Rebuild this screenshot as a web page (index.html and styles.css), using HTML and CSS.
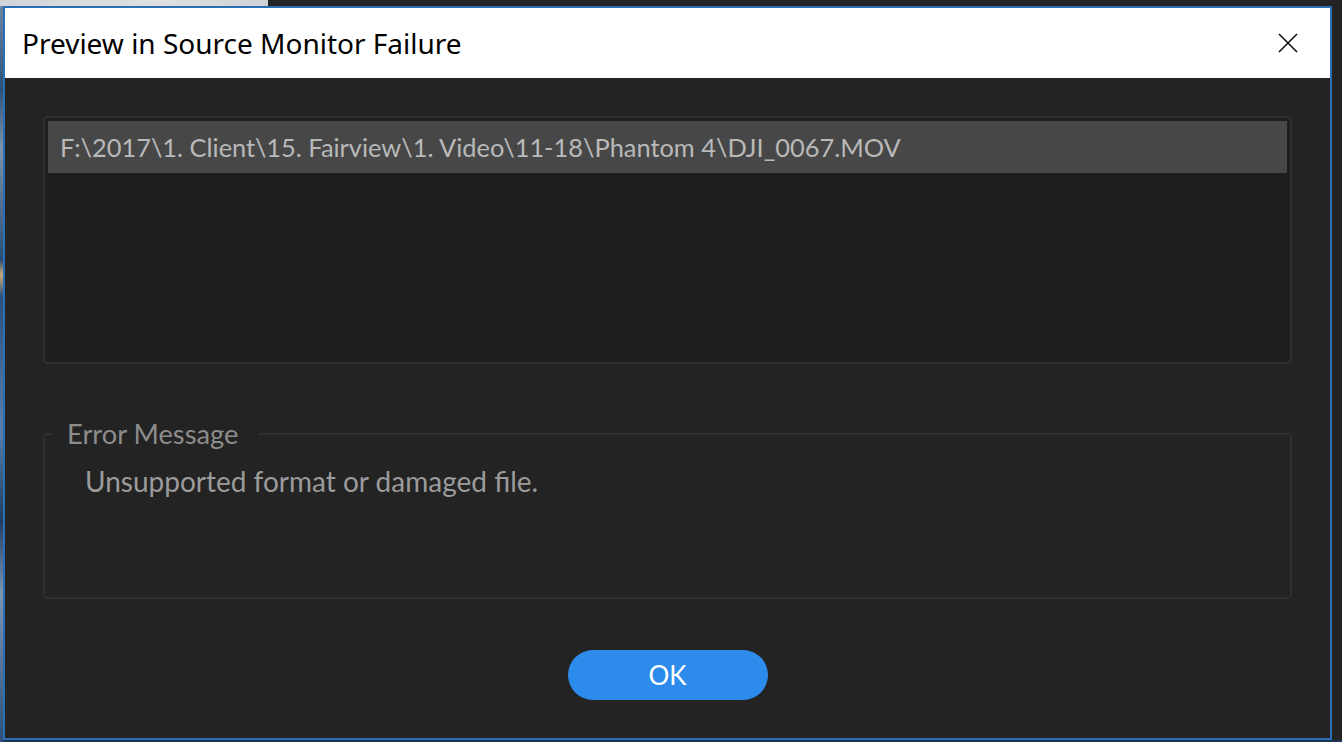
FILE: index.html
```html
<!DOCTYPE html>
<html>
<head>
<meta charset="utf-8">
<link rel="stylesheet" href="styles.css">
</head>
<body>
<div class="dialog">
  <div class="titlebar">
    <span class="title">Preview in Source Monitor Failure</span>
    <svg class="close" width="20" height="20" viewBox="0 0 20 20"><path d="M1 1L19 19M19 1L1 19" stroke="#111" stroke-width="1.6" fill="none"/></svg>
  </div>
  <div class="body">
    <div class="listbox">
      <div class="row">F:\2017\1. Client\15. Fairview\1. Video\11-18\Phantom 4\DJI_0067.MOV</div>
    </div>
    <div class="group">
      <span class="legend">Error Message</span>
      <p class="message">Unsupported format or damaged file.</p>
    </div>
    <div class="actions"><button class="ok">OK</button></div>
  </div>
</div>
</body>
</html>
```
FILE: styles.css
```css
html, body { margin: 0; padding: 0; }
body {
  width: 1342px;
  height: 742px;
  overflow: hidden;
  background-color: #232323;
  background-image:
    linear-gradient(90deg, #d2d5d8, #e0e0e0 60%, #cfd2d5),
    linear-gradient(180deg, #6f8aa6 0%, #2d5179 12%, #7d93ab 20%, #2a4d75 35%, #c9a97a 37%, #2b4f7a 40%, #5a7ea8 58%, #1f3d62 70%, #7b95b3 80%, #2c4f78 100%),
    linear-gradient(#1d3550, #1d3550);
  background-size: 268px 6px, 3px 742px, 100% 2px;
  background-position: 0 0, 0 0, 0 740px;
  background-repeat: no-repeat;
  font-family: "Lato", "Open Sans", sans-serif;
}
.dialog {
  box-sizing: border-box;
  margin: 6px 0 0 3px;
  width: 1329px;
  height: 734px;
  border: 2px solid #2a6fb3;
  background: #232323;
  display: flex;
  flex-direction: column;
}
.titlebar {
  height: 70px;
  flex: none;
  background: #ffffff;
  display: flex;
  align-items: center;
  justify-content: space-between;
  padding: 0 32px 0 17px;
}
.title {
  font-family: "Noto Sans", sans-serif;
  font-size: 28px;
  color: #000;
}
.close { display: block; }
.body {
  flex: 1;
  display: flex;
  flex-direction: column;
  padding: 38px 38px 0 38px;
}
.listbox {
  box-sizing: border-box;
  height: 248px;
  border: 2px solid #2f2f2f;
  border-radius: 5px;
  background: #1e1e1e;
  padding: 3px;
}
.row {
  height: 52px;
  background: #474747;
  color: #b9b9b9;
  font-size: 25.4px;
  line-height: 52px;
  padding-left: 12px;
  white-space: nowrap;
}
.group {
  position: relative;
  box-sizing: border-box;
  margin-top: 69px;
  height: 166px;
  border: 2px solid #303030;
  border-radius: 5px;
}
.legend {
  position: absolute;
  left: 8px;
  top: -16px;
  padding: 0 20px 0 14px;
  background: #232323;
  color: #8c8c8c;
  font-size: 27.3px;
  line-height: 30px;
}
.message {
  margin: 26px 0 0 40px;
  color: #9b9b9b;
  font-size: 28px;
  line-height: 40px;
}
.actions {
  display: flex;
  justify-content: center;
  margin-top: 51px;
}
.ok {
  width: 200px;
  height: 50px;
  border: none;
  border-radius: 25px;
  background: #2d8ceb;
  color: #ffffff;
  font-family: "Lato", sans-serif;
  font-size: 26px;
  padding: 0;
}
```
